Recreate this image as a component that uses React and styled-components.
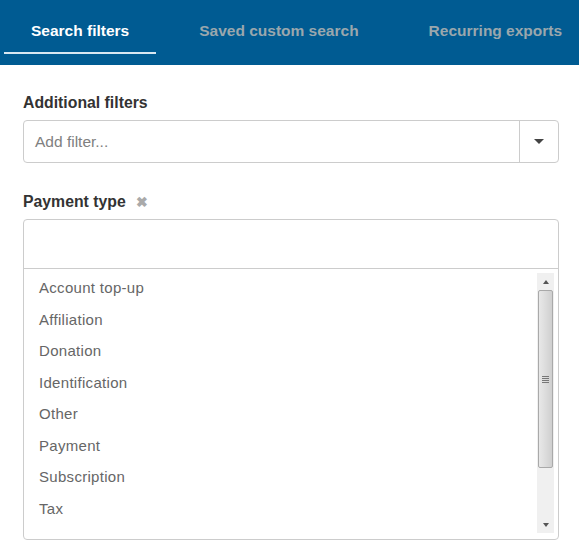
import React from "react";
import styled, { createGlobalStyle } from "styled-components";

const GlobalStyle = createGlobalStyle`
  body {
    margin: 0;
    font-family: "Liberation Sans", Arial, sans-serif;
    background: #fff;
  }
`;

const Header = styled.div`
  height: 65px;
  background: #005b92;
  display: flex;
  gap: 16px;
  padding-left: 4px;
  overflow: hidden;
`;

const Tab = styled.div`
  flex: none;
  padding: 9px 27px 0;
  height: 54px;
  box-sizing: border-box;
  display: flex;
  align-items: center;
  font-size: 15.5px;
  font-weight: bold;
  color: ${(p) => (p.active ? "#ffffff" : "#9aa7ad")};
  border-bottom: 2px solid ${(p) => (p.active ? "#d9e8f2" : "transparent")};
  white-space: nowrap;
`;

const Content = styled.div`
  padding: 29px 20px 0 23px;
  display: flex;
  flex-direction: column;
`;

const Label = styled.div`
  display: flex;
  align-items: center;
  gap: 10px;
  font-size: 15.8px;
  font-weight: bold;
  color: #333;
  margin-bottom: 8px;
  margin-top: ${(p) => p.top || 0}px;
`;

const Remove = styled.span`
  color: #aaa;
  font-size: 14px;
  font-weight: bold;
`;

const Select = styled.div`
  height: 43px;
  box-sizing: border-box;
  border: 1px solid #ccc;
  border-radius: 4px;
  display: flex;
`;

const Placeholder = styled.div`
  flex: 1;
  display: flex;
  align-items: center;
  padding-left: 11px;
  font-size: 15.5px;
  color: #808080;
`;

const Caret = styled.div`
  width: 38px;
  border-left: 1px solid #ccc;
  display: flex;
  align-items: center;
  justify-content: center;
  &::after {
    content: "";
    border-left: 5px solid transparent;
    border-right: 5px solid transparent;
    border-top: 5px solid #444;
  }
`;

const MultiBox = styled.div`
  height: 321px;
  box-sizing: border-box;
  border: 1px solid #ccc;
  border-radius: 4px;
  display: flex;
  flex-direction: column;
`;

const SearchInput = styled.div`
  height: 48px;
  flex: none;
  border-bottom: 1px solid #ccc;
`;

const ListArea = styled.div`
  flex: 1;
  display: flex;
  padding: 4px 4px 6px 0;
  min-height: 0;
`;

const List = styled.ul`
  flex: 1;
  list-style: none;
  margin: 0;
  padding: 0 0 0 15px;
  overflow: hidden;
`;

const Item = styled.li`
  height: 31.5px;
  line-height: 30px;
  font-size: 15px;
  letter-spacing: 0.3px;
  color: #666;
`;

const Scrollbar = styled.div`
  width: 17px;
  background: #f0f0f0;
  display: flex;
  flex-direction: column;
`;

const Arrow = styled.div`
  height: 17px;
  flex: none;
  display: flex;
  align-items: center;
  justify-content: center;
  &::after {
    content: "";
    border-left: 3.5px solid transparent;
    border-right: 3.5px solid transparent;
    ${(p) => (p.up ? "border-bottom" : "border-top")}: 4px solid #555;
  }
`;

const Thumb = styled.div`
  margin: 0 1px;
  height: 178px;
  box-sizing: border-box;
  border: 1px solid #a9a9a9;
  border-radius: 2px;
  background: linear-gradient(to right, #e8e8e8, #dcdcdc 50%, #cfcfcf);
  display: flex;
  align-items: center;
  justify-content: center;
`;

const Grip = styled.div`
  width: 7px;
  height: 7px;
  background: repeating-linear-gradient(
    to bottom,
    #777 0,
    #777 1px,
    transparent 1px,
    transparent 2px
  );
`;

const Spacer = styled.div`
  flex: 1;
`;

const items = [
  "Account top-up",
  "Affiliation",
  "Donation",
  "Identification",
  "Other",
  "Payment",
  "Subscription",
  "Tax",
];

export default function App() {
  return (
    <>
      <GlobalStyle />
      <Header>
        <Tab active>Search filters</Tab>
        <Tab>Saved custom search</Tab>
        <Tab>Recurring exports</Tab>
      </Header>
      <Content>
        <Label>Additional filters</Label>
        <Select>
          <Placeholder>Add filter...</Placeholder>
          <Caret />
        </Select>
        <Label top={30}>
          Payment type <Remove>✖</Remove>
        </Label>
        <MultiBox>
          <SearchInput />
          <ListArea>
            <List>
              {items.map((it) => (
                <Item key={it}>{it}</Item>
              ))}
            </List>
            <Scrollbar>
              <Arrow up />
              <Thumb>
                <Grip />
              </Thumb>
              <Spacer />
              <Arrow />
            </Scrollbar>
          </ListArea>
        </MultiBox>
      </Content>
    </>
  );
}
